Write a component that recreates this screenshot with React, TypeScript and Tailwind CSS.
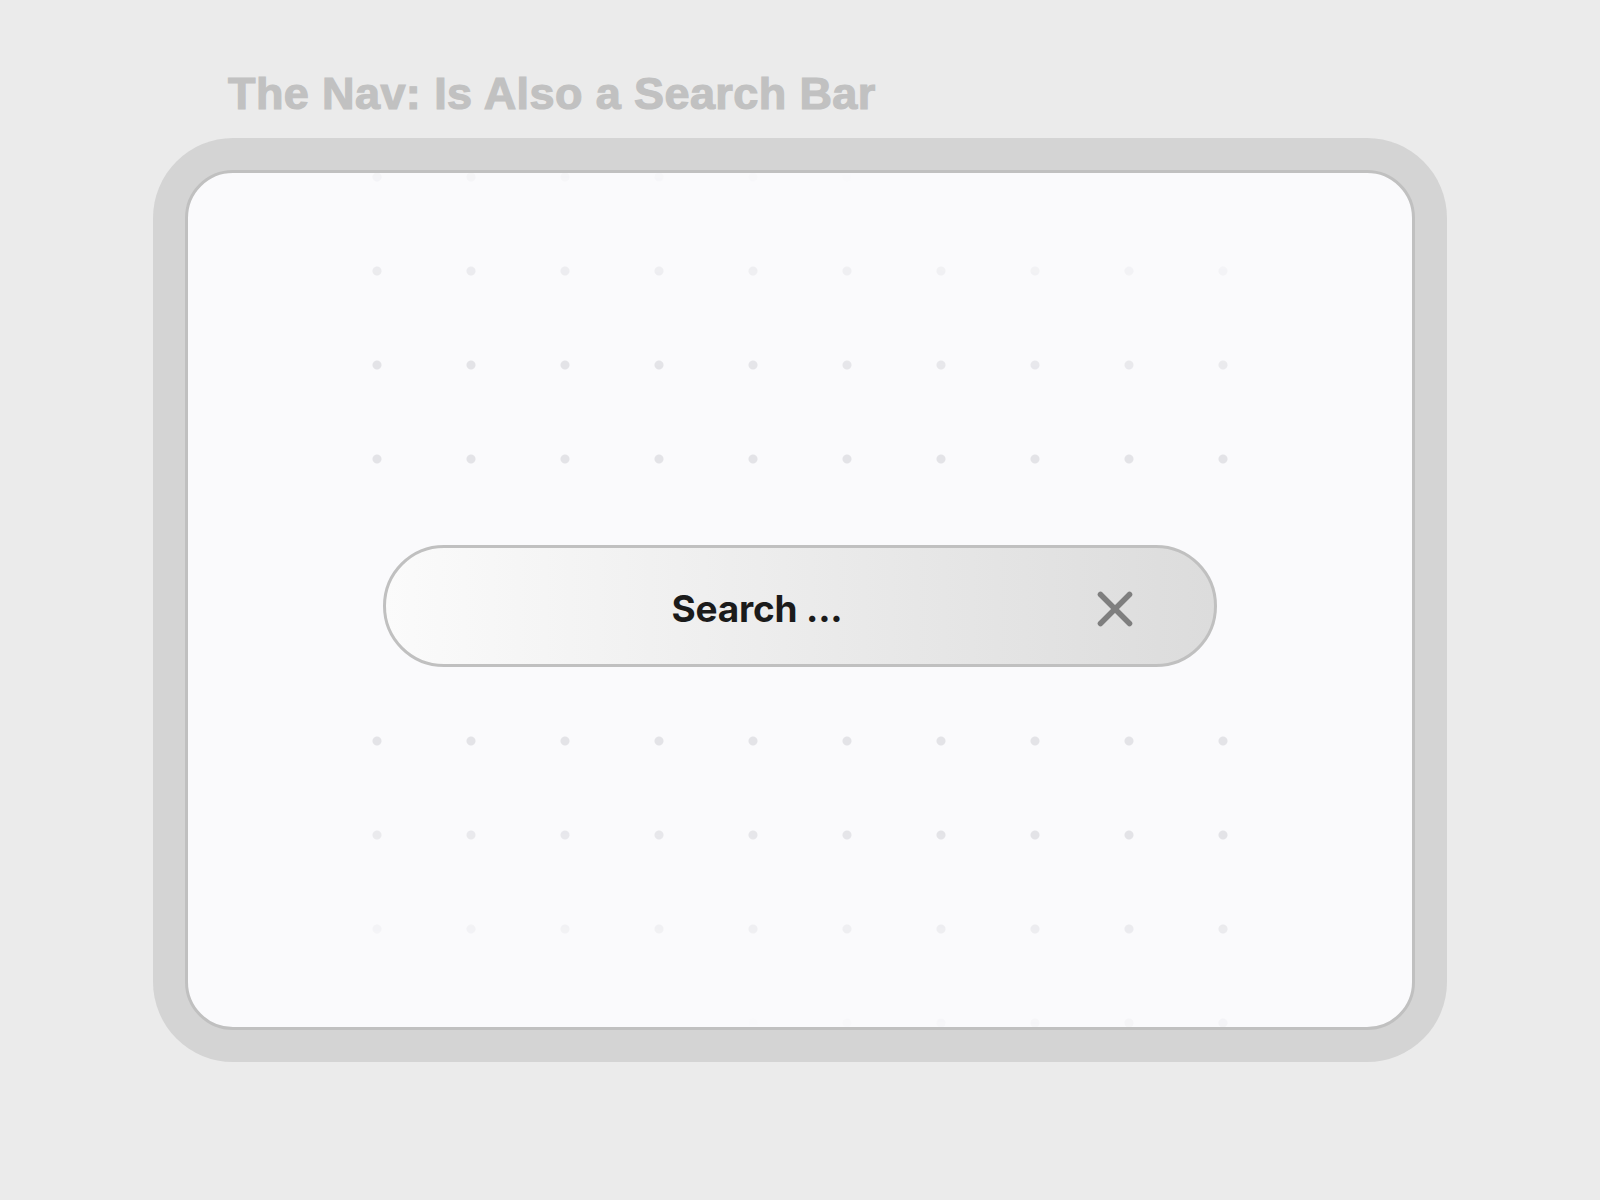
import React from "react";

function CloseIcon({ className }: { className?: string }) {
  return (
    <svg viewBox="0 0 36 36" className={className} fill="none" stroke="currentColor" strokeWidth={5.5} strokeLinecap="round">
      <path d="M3.5 3.5 32.5 32.5" />
      <path d="M32.5 3.5 3.5 32.5" />
    </svg>
  );
}

// 4 rows x 10 columns of faint dots; the mask fades them away from the bar
function DotField({ fade }: { fade: "up" | "down" }) {
  return (
    <div
      className={
        fade === "up"
          ? "h-[376px] w-[940px] shrink-0 bg-[radial-gradient(circle,#e3e3e7_4px,transparent_5px)] bg-size-[94px_94px] [mask-image:linear-gradient(186deg,transparent_18%,black_64%)]"
          : "h-[376px] w-[940px] shrink-0 bg-[radial-gradient(circle,#e3e3e7_4px,transparent_5px)] bg-size-[94px_94px] [mask-image:linear-gradient(6deg,transparent_18%,black_64%)]"
      }
    />
  );
}

function SearchPill() {
  return (
    <div className="mt-[12px] flex h-[122px] w-[834px] items-center gap-[50px] rounded-full border-[3px] border-[#c0c0c0] bg-linear-to-r from-[#fbfbfb] to-[#dcdcdc] px-[81px] pt-[5px]">
      <span className="flex-1 text-center font-['Inter',sans-serif] text-[37px] font-bold leading-none tracking-[-0.2px] text-[#1b1b1b]">
        Search ...
      </span>
      <button type="button" aria-label="Clear search" className="text-[#7f7f7f]">
        <CloseIcon className="h-9 w-9" />
      </button>
    </div>
  );
}

export default function App() {
  return (
    <div className="flex min-h-screen flex-col items-center bg-[#ebebeb] pt-[71px]">
      <div className="w-[1294px]">
        <h1 className="pl-[75px] font-['Liberation_Sans',Arial,sans-serif] text-[45px] font-bold leading-none tracking-[0.4px] text-[#c1c1c1] [-webkit-text-stroke:1.2px_#c1c1c1]">
          The Nav: Is Also a Search Bar
        </h1>

        {/* ── Device frame ───────────────────────────────────── */}
        <div className="mt-[22px] h-[924px] rounded-[80px] bg-[#d4d4d4] p-[32px]">
          <div className="flex h-full flex-col items-center justify-center overflow-hidden rounded-[48px] border-[3px] border-[#c0c0c0] bg-[#fafafc]">
            <DotField fade="up" />
            <div className="flex h-[188px] shrink-0 items-center">
              <SearchPill />
            </div>
            <DotField fade="down" />
          </div>
        </div>
      </div>
    </div>
  );
}
